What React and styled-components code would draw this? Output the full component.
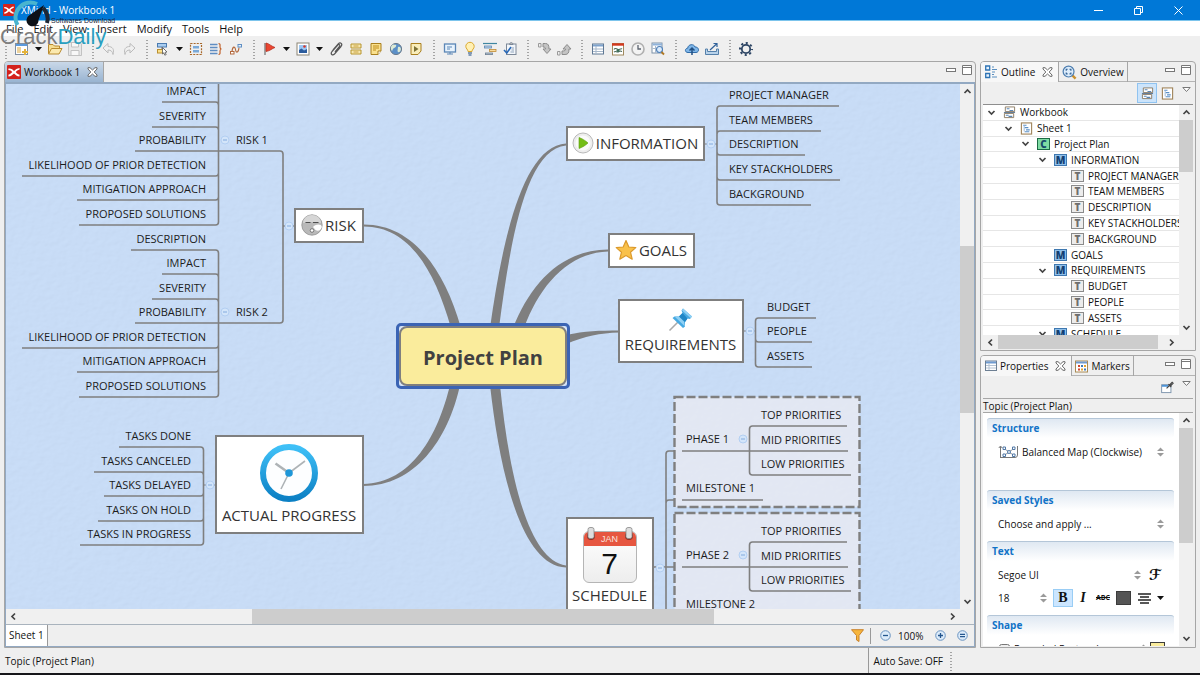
import React from "react";
import styled, { createGlobalStyle, css } from "styled-components";

const GlobalStyle = createGlobalStyle`
  *, *::before, *::after { box-sizing: border-box; }
  body { margin: 0; background: #efefef; }
  button, select { font: inherit; color: inherit; background: none; border: 0; margin: 0; padding: 0; }
  ul { list-style: none; margin: 0; padding: 0; }
  svg { display: block; flex: none; }
`;

const LINE = "#7f7f7f";

const Shell = styled.div`
  position: relative;
  display: flex;
  flex-direction: column;
  height: 100vh;
  min-height: 480px;
  overflow: hidden;
  font-family: "Open Sans", "Noto Sans", sans-serif;
  font-size: 10px;
  line-height: 14px;
  color: #111;
  background: #efefef;
`;

/* ---------- title bar, menu, watermark ---------- */
const TitleBar = styled.header`
  display: flex;
  align-items: center;
  height: 21px;
  flex: none;
  padding: 0 2px 0 3px;
  background: #0078d7;
  border-bottom: 1px solid #7cc4ec;
  color: #fff;
`;
const Title = styled.h1`
  flex: 1;
  margin: 0 0 0 6px;
  font-size: 10px;
  font-weight: 400;
`;
const WindowButton = styled.button`
  width: 40px;
  height: 20px;
  display: grid;
  place-items: center;
`;
const MenuBar = styled.nav`
  display: flex;
  align-items: center;
  height: 15px;
  flex: none;
  padding-left: 6px;
  gap: 10px;
  background: #fff;
  font-size: 11px;
`;
const Watermark = styled.div`
  position: absolute;
  left: 0;
  top: 0;
  z-index: 5;
  pointer-events: none;
  font-family: "Liberation Sans", sans-serif;
`;
const WatermarkTag = styled.div`
  position: absolute;
  left: 51px;
  top: 16px;
  font-size: 7px;
  line-height: 10px;
  white-space: nowrap;
  color: #223;
`;
const WatermarkName = styled.div`
  position: absolute;
  left: 0;
  top: 22px;
  font-size: 22px;
  line-height: 30px;
  white-space: nowrap;
  color: #7d7d7d;
  b { color: #2a9fc0; font-weight: 400; }
`;

/* ---------- toolbar ---------- */
const ToolBar = styled.div`
  display: flex;
  align-items: center;
  height: 25px;
  flex: none;
  margin-left: -2px;
`;
const ToolButton = styled.button`
  width: ${(p) => (p.$menu ? 13 : 20)}px;
  height: 20px;
  display: grid;
  place-items: center;
  opacity: ${(p) => (p.$off ? 0.6 : 1)};
`;
const ToolSep = styled.span`
  width: 14px;
  height: 20px;
  background: radial-gradient(circle, #a4a4a4 1px, transparent 1px) 7px 0 / 2px 3px repeat-y;
`;

/* ---------- frames ---------- */
const Main = styled.main`
  flex: 1;
  min-height: 0;
  display: flex;
  gap: 4px;
  padding: 0 4px;
`;
const Panel = styled.section`
  display: flex;
  flex-direction: column;
  min-width: 0;
  min-height: 0;
  flex: ${(p) => p.$grow || 1};
  border: 1px solid #a6a6a6;
  border-radius: 4px 4px 0 0;
`;
const SideColumn = styled.aside`
  display: flex;
  flex-direction: column;
  gap: 4px;
  width: 216px;
  flex: none;
`;
const TabStrip = styled.div`
  display: flex;
  height: 20px;
  flex: none;
  position: relative;
  ${(p) => p.$ruled && css`box-shadow: inset 0 -1px 0 #b4b4b4;`}
`;
const Tab = styled.button`
  display: flex;
  align-items: center;
  height: 20px;
  gap: 3px;
  padding: 0 ${(p) => (p.$active ? 5 : 3)}px 0 ${(p) => (p.$active ? 4 : 3)}px;
  border-right: 1px solid #a6a6a6;
  white-space: nowrap;
  border-radius: 3px 0 0 0;
  ${(p) => p.$active && css`background: #f7f7f7;`}
  ${(p) => p.$editor && css`
    padding: 0 5px 0 2px;
    background: linear-gradient(#c9d8e8, #99b4d1);
  `}
  span + svg { margin-left: 4px; }
`;
const StripTools = styled.div`
  display: flex;
  gap: 4px;
  margin-left: auto;
  padding: 2px ${(p) => p.$end || 1}px 0 0;
`;
const MiniButton = styled.button`
  width: 12px;
  height: 12px;
  display: grid;
  place-items: center;
`;
const ViewMenuButton = styled(MiniButton)`
  align-self: flex-start;
  margin: 2px 0 0 3px;
`;

/* ---------- scroll bars ---------- */
const ScrollBar = styled.div`
  display: flex;
  flex: none;
  flex-direction: ${(p) => (p.$row ? "row" : "column")};
  ${(p) => (p.$row ? "height" : "width")}: ${(p) => p.$size || 14}px;
  ${(p) => p.$row && css`margin-right: 14px;`}
  background: #f0f0f0;
`;
const ScrollEnd = styled.button`
  display: grid;
  place-items: center;
  flex: 0 0 15px;
`;
const Track = styled.div`
  flex: 1;
  display: flex;
  flex-direction: inherit;
  &::before { content: ""; flex: ${(p) => p.$before}; }
  &::after { content: ""; flex: ${(p) => p.$after}; }
`;
const Thumb = styled.div`
  flex: ${(p) => p.$size};
  background: #cdcdcd;
`;
const Chevron = ({ dir }) => (
  <svg width="9" height="9" viewBox="0 0 9 9" fill="none" stroke="#444" strokeWidth="1.7">
    <path d={{ up: "M1.5 6L4.5 3L7.5 6", down: "M1.5 3L4.5 6L7.5 3", left: "M6 1.5L3 4.5L6 7.5", right: "M3 1.5L6 4.5L3 7.5" }[dir]} />
  </svg>
);
const Scroller = ({ row, size, before, thumb, after }) => (
  <ScrollBar $row={row} $size={size}>
    <ScrollEnd aria-label={row ? "Scroll left" : "Scroll up"}><Chevron dir={row ? "left" : "up"} /></ScrollEnd>
    <Track $before={before} $after={after}><Thumb $size={thumb} /></Track>
    <ScrollEnd aria-label={row ? "Scroll right" : "Scroll down"}><Chevron dir={row ? "right" : "down"} /></ScrollEnd>
  </ScrollBar>
);

/* ---------- editor ---------- */
const EditorBody = styled.div`
  flex: 1;
  min-height: 0;
  display: flex;
  flex-direction: column;
  border: 1px solid #93a9c2;
  border-top-width: 2px;
`;
const EditorView = styled.div`
  flex: 1;
  min-height: 0;
  display: flex;
`;
const Canvas = styled.div`
  position: relative;
  flex: 1;
  min-width: 0;
  overflow: hidden;
  background: #c8dcf6;
`;
const Paper = styled.svg`
  position: absolute;
  inset: 0;
  width: 100%;
  height: 100%;
`;
/* the map is scrolled by this offset inside its view port */
const MapLayer = styled.div`
  position: absolute;
  left: -6px;
  top: -84px;
  width: 1200px;
  height: 900px;
`;
const Lines = styled.svg`
  position: absolute;
  inset: 0;
`;
const SubTopic = styled.div`
  position: absolute;
  ${(p) => (p.$right ? `right: ${1200 - p.$x}px` : `left: ${p.$x}px`)};
  top: ${(p) => p.$y - 8}px;
  font-size: 11px;
  line-height: 16px;
  white-space: nowrap;
  color: #1c1c1c;
`;
const MainTopic = styled.div`
  position: absolute;
  left: ${(p) => p.$x}px;
  top: ${(p) => p.$y}px;
  width: ${(p) => p.$w}px;
  height: ${(p) => p.$h}px;
  display: flex;
  flex-direction: ${(p) => (p.$stack ? "column" : "row")};
  align-items: center;
  justify-content: center;
  gap: 2px;
  padding: 0 1px 2px 0;
  border: 2px solid ${LINE};
  background: #fff;
  font-size: 15px;
  line-height: 20px;
  white-space: nowrap;
  color: #333;
`;
const CentralTopic = styled.div`
  position: absolute;
  left: 399px;
  top: 326px;
  width: 168px;
  height: 60px;
  padding-top: 3px;
  display: grid;
  place-items: center;
  border: 2px solid ${LINE};
  border-radius: 8px;
  background: #faec9c;
  box-shadow: 0 0 0 2px #d5e3f6;
  font-size: 20px;
  font-weight: 700;
  color: #414141;
  &::before {
    content: "";
    position: absolute;
    inset: -5px;
    border: 3px solid #3b64b4;
    border-radius: 5px;
  }
`;
const SheetBar = styled.div`
  display: flex;
  align-items: center;
  height: 22px;
  flex: none;
  border-top: 1px solid #a9b3bd;
`;
const SheetTab = styled.button`
  align-self: stretch;
  padding: 0 3px 2px;
  background: #fff;
  border-right: 1px solid #999;
  margin-right: auto;
`;
const ZoomTools = styled.div`
  display: flex;
  align-items: center;
  padding-right: 4px;
`;
const ZoomButton = styled.button`
  display: grid;
  place-items: center;
  width: 16px;
  height: 18px;
  margin-left: ${(p) => (p.$apart ? 6 : 0)}px;
`;
const ZoomSep = styled.span`
  width: 1px;
  height: 16px;
  margin: 0 6px 0 5px;
  background: #999;
`;
const ZoomValue = styled.span`
  width: 39px;
  padding-left: 5px;
`;

/* ---------- outline ---------- */
const PanelTools = styled.div`
  display: flex;
  justify-content: flex-end;
  align-items: center;
  height: 22px;
  flex: none;
  padding-right: 3px;
`;
const PanelTool = styled.button`
  width: 20px;
  height: 20px;
  display: grid;
  place-items: center;
  ${(p) => p.$on && css`background: #cce4fb; border: 1px solid #90c3f0;`}
`;
const TreeFrame = styled.div`
  flex: 1;
  min-height: 0;
  display: flex;
  flex-direction: column;
  margin: 0 2px 1px;
  border-top: 1px solid #8e8e8e;
  background: #f0f0f0;
`;
const TreeArea = styled.div`
  flex: 1;
  min-height: 0;
  display: flex;
`;
const TreeView = styled.div`
  flex: 1;
  min-width: 0;
  overflow: hidden;
  background: #fff;
`;
const Tree = styled.ul`
  display: grid;
  grid-auto-rows: 1fr;
  height: 237px;
`;
const TreeRow = styled.li`
  display: flex;
  align-items: center;
  gap: 4px;
  min-height: 0;
  padding-left: ${(p) => 4 + p.$depth * 17}px;
  border-bottom: 1px solid #e6e6e6;
  white-space: nowrap;
  > svg:first-child, > i:first-child { width: 9px; margin-right: 3px; flex: none; }
`;
const badge = { C: ["#7fdca4", "#1c6b45", "#174a6a"], M: ["#8fc0ea", "#3f78b0", "#123f73"], T: ["#ececec", "#8b8b8b", "#6e6e6e"] };
const Badge = styled.span`
  width: 13px;
  height: 12px;
  flex: none;
  display: grid;
  place-items: center;
  border: 1px solid ${(p) => badge[p.$kind][1]};
  background: ${(p) => badge[p.$kind][0]};
  color: ${(p) => badge[p.$kind][2]};
  font-weight: 800;
  line-height: 10px;
`;

/* ---------- properties ---------- */
const PropertyTitle = styled.h2`
  margin: 0 2px;
  flex: none;
  height: 15px;
  border: solid #a6a6a6;
  border-width: 1px 0;
  font-size: 10px;
  font-weight: 400;
  line-height: 14px;
`;
const PropertyFrame = styled.div`
  flex: 1;
  min-height: 0;
  display: flex;
  margin: 0 2px 1px;
`;
const PropertyView = styled.div`
  flex: 1;
  min-width: 0;
  overflow: hidden;
  padding: 5px 5px 0 4px;
  background: #fff;
`;
const Group = styled.section`
  padding-bottom: ${(p) => (p.$roomy ? 28 : 7)}px;
`;
const GroupTitle = styled.h3`
  margin: 0 0 4px;
  height: 20px;
  padding-left: 5px;
  border-top: 1px solid #b4c6d8;
  border-radius: 3px;
  background: linear-gradient(#dfe8f2, #fff);
  font-size: 10px;
  line-height: 19px;
  font-weight: 700;
  color: #1173c7;
`;
const Field = styled.div`
  display: flex;
  align-items: center;
  height: 20px;
  padding-left: 11px;
  margin-bottom: ${(p) => (p.$tight ? 3 : 0)}px;
`;
const Picker = styled.label`
  position: relative;
  display: flex;
  align-items: center;
  gap: 3px;
  flex: ${(p) => (p.$w ? `0 0 ${p.$w}px` : 1)};
  padding-right: ${(p) => p.$end || 0}px;
  select { flex: 1; min-width: 0; appearance: none; outline: 0; }
`;
const TextButton = styled.button`
  width: 20px;
  height: 18px;
  display: grid;
  place-items: center;
  font-family: "Liberation Serif", serif;
  font-size: 14px;
  font-weight: 700;
  font-style: ${(p) => (p.$italic ? "italic" : "normal")};
  ${(p) => p.$on && css`background: #cce6ff; border: 1px solid #99cdf5;`}
`;
const StrikeButton = styled(TextButton)`
  font-family: "Open Sans", sans-serif;
  font-size: 7px;
  text-decoration: line-through;
`;
const ScriptButton = styled(TextButton)`
  width: 28px;
  margin-right: 5px;
  font-family: "DejaVu Sans", "DejaVu Serif", serif;
  font-size: 15px;
`;
const Swatch = styled.button`
  width: 15px;
  height: 14px;
  margin: 0 3px 0 3px;
  border: 1px solid #3c3c3c;
  background: #555;
`;
const FillSwatch = styled(Swatch)`
  background: #faec9c;
`;

/* ---------- status ---------- */
const StatusBar = styled.footer`
  display: flex;
  align-items: center;
  height: 27px;
  flex: none;
  padding: 0 243px 0 5px;
  border-bottom: 2px solid #16161a;
`;
const StatusCell = styled.span`
  margin-left: auto;
  align-self: stretch;
  display: flex;
  align-items: center;
  border-left: 1px solid #999;
  padding-left: 4px;
`;

/* ---------- icons ---------- */
const Ic = ({ w = 16, children, s = 16 }) => (
  <svg width={w} height={w} viewBox={`0 0 ${s} ${s}`} fill="none">{children}</svg>
);
const XLogo = ({ w = 12 }) => (
  <svg width={w} height={w} viewBox="0 0 14 14">
    <rect width="14" height="14" rx="1" fill="#d3221d" />
    <path d="M1.5 3.6C4.5 3.4 5.6 4.6 7 6.1C8.6 4.4 10 3.2 12.5 2.9L12.6 4.4C10.8 5 9.6 5.8 8.7 7C9.8 8.4 10.8 9.3 12.6 9.8L12.4 11.4C9.9 11.2 8.5 10 7 8.4C5.4 10 4 11.2 1.5 11.4L1.4 9.8C3.2 9.3 4.3 8.3 5.3 7.1C4.2 5.8 3.2 5.2 1.4 5.1Z" fill="#fff" />
  </svg>
);
const CloseMark = () => (
  <svg width="11" height="10" viewBox="0 0 11 10" fill="#fff" stroke="#6b6b6b" strokeWidth="1">
    <path d="M1 .7H3L5.5 3L8 .7H10V2L7.2 5L10 8V9.3H8L5.5 7L3 9.3H1V8L3.8 5L1 2Z" />
  </svg>
);
const Caret = () => <svg width="7" height="4"><path d="M0 0H7L3.5 4Z" fill="#111" /></svg>;
const Spin = () => (
  <svg width="7" height="10"><path d="M0 4H7L3.5 .5ZM0 6H7L3.5 9.500Z" fill="#9a9a9a" /></svg>
);
const MinimizeMark = () => <svg width="10" height="5"><rect x=".5" y=".5" width="9" height="3" fill="#fff" stroke="#777" /></svg>;
const MaximizeMark = () => <svg width="10" height="10"><path d="M.5 .5H9.500V9.500H.5ZM.5 2.500H9.500" fill="#fff" stroke="#777" /></svg>;
const ViewMenuMark = () => <svg width="9" height="6"><path d="M.8 .5H8.200L4.500 4.500Z" fill="#fff" stroke="#777" /></svg>;
const BookIcon = ({ w = 13 }) => (
  <Ic w={w} s={14}>
    <path d="M2.500 1H12.500V6H2.500ZM1.500 8H11.500V12.500H1.500Z" fill="#fff" stroke="#8a7a62" />
    <path d="M4 3H7M7 4.800H11M3 10H6M6 11.200H10" stroke="#5a86b5" strokeWidth="1.200" />
    <path d="M1 7H13" stroke="#5c7691" />
  </Ic>
);
const SheetIcon = ({ w = 12 }) => (
  <Ic w={w} s={14}>
    <rect x="1.500" y="1" width="11" height="12" fill="#fff" stroke="#a0855c" strokeWidth="1.200" />
    <path d="M3.500 3.500H7M5 6H9M6.500 8.500H10.500M5 10.500H10" stroke="#5a8fc6" strokeWidth="1.300" />
    <path d="M4.500 4V10" stroke="#9ab8d6" />
  </Ic>
);
const OutlineIcon = () => (
  <svg width="13" height="14" viewBox="0 0 13 14" fill="#e6f2fd" stroke="#2f74b5">
    <path d="M.7 1H4.700V5H.7ZM.7 8.500H4.700V12.500H.7Z" strokeWidth="1.300" />
    <path d="M7 2H9M7 4.500H12M7 7H10M7 9.500H9M7 12H12" stroke="#5b8fc0" strokeWidth="1.200" />
  </svg>
);
const OverviewIcon = () => (
  <Ic w={15}>
    <path d="M10.500 10.500L14.500 14.500" stroke="#c9902f" strokeWidth="2.600" />
    <circle cx="7" cy="7" r="5.800" fill="#dcecfb" stroke="#4d7daf" strokeWidth="1.300" />
    <path d="M4.500 6V4.500H6M8 4.500H9.500V6M9.500 8V9.500H8M6 9.500H4.500V8" stroke="#2f5f93" strokeWidth="1.200" />
  </Ic>
);
const PropertiesIcon = () => (
  <Ic w={12} s={12}>
    <rect x=".5" y="1" width="11" height="9.500" fill="#fff" stroke="#6d7f93" />
    <path d="M1 2.500H11" stroke="#6f9bd0" strokeWidth="2" />
    <path d="M4 3V10M1 5.500H11M1 8H11" stroke="#b5c3d3" />
  </Ic>
);
const MarkersIcon = () => (
  <Ic w={13} s={13}>
    <rect x=".5" y="1" width="12" height="11" fill="#fff" stroke="#a88a52" />
    <path d="M1 2.500H12" stroke="#6f9bd0" strokeWidth="2" />
    <path d="M3 6H5M3 9.500H5" stroke="#d2452c" strokeWidth="2" />
    <path d="M6 6H8M9 9.500H11" stroke="#3c79b8" strokeWidth="2" />
    <path d="M9 6H11M6 9.500H8" stroke="#e5a22c" strokeWidth="2" />
  </Ic>
);
const PinViewIcon = () => (
  <Ic w={13} s={14}>
    <rect x=".7" y="4" width="10" height="8.500" fill="#fff" stroke="#7c93ac" />
    <path d="M1 5.200H8" stroke="#4e94d8" strokeWidth="2" />
    <path d="M6 8L9 5M8 3.500L11 6.500M9.500 4L12 1.500L13 2.500L10.500 5" stroke="#444" strokeWidth="1.300" />
  </Ic>
);

const icons = {
  new: <Ic><rect x="1.500" y="2.500" width="12" height="11" fill="#fff" stroke="#7f8fa3" /><path d="M2 4H13" stroke="#5b9add" strokeWidth="2" /><path d="M3 7H7M3 9H7M3 11H7" stroke="#d9a63c" /><path d="M11 8V14M8 11H14" stroke="#e3b23b" strokeWidth="2" /></Ic>,
  open: <Ic><path d="M1.500 12.500V3.500H6L7.500 5H12.500V7" fill="#f6dd91" stroke="#b98a2d" /><path d="M1.500 13L4.500 7.500H15L12 13Z" fill="#fbe9ae" stroke="#b98a2d" /></Ic>,
  save: <Ic><path d="M1.500 1.500H13L14.500 3V14.500H1.500Z" fill="#e4e4e4" stroke="#a5a5a5" /><path d="M4.500 2V6H11.500V2M4 14V9.500H12V14" fill="#fff" stroke="#a5a5a5" /></Ic>,
  undo: <Ic><path d="M2 7L7 2.500V5.500C11.500 5.500 13.500 8 12 13.500C11.500 10.500 10 9 7 9V12Z" fill="#f2f2f2" stroke="#999" /></Ic>,
  redo: <Ic><path d="M14 7L9 2.500V5.500C4.500 5.500 2.500 8 4 13.500C4.500 10.500 6 9 9 9V12Z" fill="#f2f2f2" stroke="#999" /></Ic>,
  topic: <Ic><rect x="2.500" y="2.500" width="9" height="3.500" fill="#a9cdf0" stroke="#4b7bb0" /><rect x="2.500" y="8.500" width="7" height="3.500" fill="#fbe08a" stroke="#b98f30" /><path d="M7 6V8" stroke="#666" /><path d="M7.500 6.500L12 11L10 11.300L11.200 13.600L9.800 14.200L8.800 11.800L7.500 13Z" fill="#fff" stroke="#555" strokeWidth=".8" /></Ic>,
  boundary: <Ic><rect x="2.500" y="2.500" width="11" height="11" stroke="#a8692c" strokeWidth="1.200" strokeDasharray="2 1.140" /><rect x="5" y="5" width="6" height="2.500" fill="#7aa9d8" /><rect x="5" y="9" width="6" height="2.500" fill="#7aa9d8" /></Ic>,
  summary: <Ic><path d="M2 3.500H9.500M2 6.500H9.500M2 9.500H9.500M2 12.500H9.500" stroke="#5f8dc2" strokeWidth="1.300" /><path d="M10.500 2.500C12.500 2.500 12 4 12 6C12 7.500 12.500 8 13.500 8C12.500 8 12 8.500 12 10C12 12 12.500 13.500 10.500 13.500" stroke="#c0622d" strokeWidth="1.200" /></Ic>,
  relation: <Ic><path d="M4 10.500C4.500 5 7 5 7.500 8.500C8 12.500 10.500 12 11 6.500" stroke="#b3683c" strokeWidth="1.100" /><rect x="10" y="3.500" width="3.500" height="2.500" fill="#e8f1fb" stroke="#5f8fc4" /><rect x="2.500" y="10.500" width="3.500" height="2.500" fill="#fff" stroke="#b3683c" /></Ic>,
  flag: <Ic><path d="M3 2V14" stroke="#8f8f8f" strokeWidth="1.600" /><path d="M4 2C7 2.500 9 5 13 6.500C10 7.500 8 10 4 10.500Z" fill="#ea4631" stroke="#b22a1b" strokeWidth=".7" /></Ic>,
  image: <Ic><rect x="2" y="2" width="12" height="12" fill="#fff" stroke="#8b8577" /><rect x="4" y="4" width="8" height="8" fill="#9cc6f2" /><path d="M4 12V9L6.500 7.500L9 9.500L12 8V12Z" fill="#2c5c9d" /><circle cx="9.500" cy="5.500" r="1.300" fill="#d5392b" /></Ic>,
  clip: <Ic><path d="M7 11L11.500 5.500C12.500 4 11 2.800 9.800 4L4 10.500C2 13 4.500 15 6.500 13L13 5.500C15 3 12.500 .5 10.200 2.800L5 8.800" stroke="#555" strokeWidth="1.200" /></Ic>,
  label: <Ic><path d="M3 3H13V7H3ZM3 9H13V13H3Z" fill="#f7e8b0" stroke="#b8952f" /><path d="M5.500 5H10.500M5.500 11H10.500" stroke="#c8a040" /></Ic>,
  note: <Ic><path d="M3 2.500H13V10L10 13.500H3Z" fill="#f9e08e" stroke="#a97f1d" /><path d="M5 5H11M5 7H11M5 9H8" stroke="#c08c18" strokeWidth="1.100" /><path d="M13 10H10V13.500" fill="#fff" stroke="#a97f1d" /></Ic>,
  web: <Ic><circle cx="8" cy="8" r="5.600" fill="#5b8fc7" stroke="#6a7b8c" /><path d="M5 3.500C7 4 9 3 8 5.500C7 7 5 7 4.500 9C4 11 3 9 2.800 7C3 5.200 4 4 5 3.500ZM10 6C12 5 13.300 7 12.800 9C11.800 11.600 10 12 9.500 10Z" fill="#dcead6" /></Ic>,
  audio: <Ic><path d="M3 2.500H13V10L10 13.500H3Z" fill="#f9edba" stroke="#a97f1d" /><path d="M6 5L10.500 8L6 11Z" fill="#7d7236" /></Ic>,
  present: <Ic><rect x="2.500" y="3" width="11" height="8" fill="#e8f3fd" stroke="#5b86b6" strokeWidth="1.300" /><path d="M5 6H10M5 8H8M5 13H11M8 11V13" stroke="#5b86b6" /></Ic>,
  idea: <Ic><path d="M6 10.500C6 8.500 3.800 7.500 3.800 5.500A4.200 4.200 0 0 1 12.200 5.500C12.200 7.500 10 8.500 10 10.500Z" fill="#fff0b4" stroke="#dba92f" /><path d="M6 12H10M6.500 14H9.500" stroke="#5f7da3" strokeWidth="1.300" /></Ic>,
  gantt: <Ic><path d="M1 2.500H15" stroke="#3f86a0" strokeWidth="1.200" /><rect x="2.500" y="5" width="7" height="2" fill="#b9d3ec" stroke="#5f87b0" strokeWidth=".8" /><rect x="7.500" y="8.500" width="6.500" height="2" fill="#f8dca0" stroke="#c08a34" strokeWidth=".8" /><rect x="3.500" y="12" width="7" height="1.600" fill="#b9c6d4" stroke="#6d7f92" strokeWidth=".8" /></Ic>,
  task: <Ic><rect x="4.500" y="3" width="9.500" height="10.500" fill="#f2f6fb" stroke="#7c8898" /><path d="M7.500 3.500C7.500 1 11 1 11 3.500Z" fill="#bbb" stroke="#7c8898" /><path d="M9.500 7H12M9.500 9H12M8.500 11H12" stroke="#8fa3ba" /><path d="M2 9L4.800 12L9 6" stroke="#2768b8" strokeWidth="1.600" /></Ic>,
  drillDown: <Ic><path d="M2.500 2.500H5V6H2.500Z" fill="#eee" stroke="#9a9a9a" /><path d="M7 2.500H9.500C12.300 2.500 13 4.500 13 8H15L11 12.500L7 8H9.500C9.500 6.500 9 6 7 6Z" fill="#c4c4c4" stroke="#8d8d8d" /></Ic>,
  drillUp: <Ic><path d="M1.500 10.500H4V14H1.500Z" fill="#eee" stroke="#9a9a9a" /><path d="M6 13.500H9C12.300 13.500 13 11.500 13 8H15L11 3.500L7 8H9.500C9.500 9.500 9 10 6 10Z" fill="#c4c4c4" stroke="#8d8d8d" /></Ic>,
  table: <Ic><rect x="2.500" y="3" width="11" height="10" fill="#fff" stroke="#5f7894" /><path d="M3 4.500H13" stroke="#7ea3cd" strokeWidth="2" /><path d="M6 5V13M3 8H13M3 10.500H13" stroke="#a6b7ca" /></Ic>,
  theme: <Ic><rect x="2.500" y="2.500" width="11" height="11.500" fill="#fff" stroke="#a08a5e" /><path d="M2 3.500H14" stroke="#d3381f" strokeWidth="2.400" /><path d="M4 8.500C5 6.500 7 8 8 8.500S11 7 12 8M4 11C6 9.500 7 12 9 10.500S11 11 12 10.500" stroke="#4a6b5a" strokeWidth="1.100" /><circle cx="8" cy="9.500" r="1.500" fill="#3c6f58" /></Ic>,
  history: <Ic><circle cx="8" cy="8" r="6" fill="#f3f3f3" stroke="#b0b0b0" strokeWidth="1.600" /><path d="M8 4V8H11" stroke="#5c6470" strokeWidth="1.300" /></Ic>,
  find: <Ic><rect x="2" y="2" width="10" height="10" fill="#fff" stroke="#7f93aa" /><path d="M2.500 3.500H12" stroke="#8fb2da" strokeWidth="2" /><path d="M5.500 5V12M2.500 7.500H6" stroke="#a9b9cb" /><circle cx="9.500" cy="8.500" r="3" fill="#dcecfc" stroke="#4d7fb8" strokeWidth="1.100" /><path d="M11.500 11L14 13.500" stroke="#b07823" strokeWidth="1.800" /></Ic>,
  cloud: <Ic><path d="M4 11.500C.5 11.500 .7 7.300 3.700 7.200C4 3 10 2.500 11 6C15.500 5.800 15.500 11.500 12 11.500Z" fill="#7fb6e8" stroke="#2f6ba8" /><path d="M8 14V7M5.500 9.500L8 7L10.500 9.500" stroke="#204f82" strokeWidth="1.500" /></Ic>,
  share: <Ic><path d="M1.500 8H3.500V10.500H12.500V8H14.500V13.500H1.500Z" fill="#b8d2ea" stroke="#5580aa" /><path d="M6 9L12.500 3M9.500 2.500H13V6" stroke="#31629a" strokeWidth="1.200" /></Ic>,
  gear: <Ic><circle cx="8" cy="8" r="4.200" stroke="#2d4564" strokeWidth="1.800" /><circle cx="8" cy="8" r="6" stroke="#2d4564" strokeWidth="2" strokeDasharray="2.100 2.612" strokeDashoffset="1" /></Ic>,
};

const tools = [
  "|", "new:New", ">", "open:Open", "save:Save:off", "|", "undo:Undo:off", "redo:Redo:off", "|",
  "topic:Topic", ">", "boundary:Boundary", "summary:Summary", "relation:Relationship", "|",
  "flag:Marker", ">", "image:Image", ">", "clip:Attachment", "label:Label", "note:Notes", "web:Hyperlink", "audio:Audio notes", "|",
  "present:Presentation", "idea:Brainstorming", "gantt:Gantt chart", "task:Task info", "|", "drillDown:Drill down", "drillUp:Drill up", "|",
  "table:Table", "theme:Theme", "history:History", "find:Find", "|", "cloud:Upload", "share:Share", "|", "gear:Preferences",
];

/* ---------- map data ---------- */
const riskItems = [["IMPACT", 162], ["SEVERITY", 152], ["PROBABILITY", 135], ["LIKELIHOOD OF PRIOR DETECTION", 22], ["MITIGATION APPROACH", 77], ["PROPOSED SOLUTIONS", 79]];
const rows = (items, ys) => items.map(([text, end], i) => ({ text, end, y: ys[i] }));
const phaseItems = [["TOP PRIORITIES", 847], ["MID PRIORITIES", 848], ["LOW PRIORITIES", 851]];
const branches = [
  { trunk: 218.5, text: 206, right: true, mid: 151, top: 80, rows: rows(riskItems, [102, 127, 151, 176, 200, 225]) },
  { trunk: 218.5, text: 206, right: true, mid: 323, rows: rows([["DESCRIPTION", 131], ...riskItems], [250, 274, 299, 323, 348, 372, 397]) },
  { trunk: 203.5, text: 191, right: true, mid: 485, rows: rows([["TASKS DONE", 119], ["TASKS CANCELED", 94], ["TASKS DELAYED", 104], ["TASKS ON HOLD", 98], ["TASKS IN PROGRESS", 80]], [447, 472, 496, 521, 545]) },
  { trunk: 717, text: 729, mid: 144, rows: rows([["PROJECT MANAGER", 839], ["TEAM MEMBERS", 821], ["DESCRIPTION", 805], ["KEY STACKHOLDERS", 840], ["BACKGROUND", 811]], [106, 131, 155, 180, 205]) },
  { trunk: 755.5, text: 767, mid: 331, rows: rows([["BUDGET", 816], ["PEOPLE", 812], ["ASSETS", 812]], [318, 342, 367]) },
  { trunk: 749.5, text: 761, mid: 451, rows: rows(phaseItems, [426, 451, 475]) },
  { trunk: 749.5, text: 761, mid: 567, rows: rows(phaseItems, [542, 567, 591]) },
];
const singles = [["RISK 1", 236, 140], ["RISK 2", 236, 312], ["PHASE 1", 686, 439], ["MILESTONE 1", 686, 488], ["PHASE 2", 686, 555], ["MILESTONE 2", 686, 604]];
const folds = [[225, 140], [225, 312], [289, 226], [210, 485], [711, 144], [750, 331], [743, 439], [743, 555], [660, 568]];

const branchPath = ({ trunk, right, mid, top, rows: list }) => {
  const s = right ? -1 : 1;
  const first = top ?? list[0].y + 3;
  const last = list[list.length - 1].y - 3;
  return `M${trunk} ${first}V${last}` + list.map(({ y, end }) => {
    if (y === mid) return `M${trunk} ${y}H${end}`;
    const d = y < mid ? 3 : -3;
    return `M${trunk} ${y + d}Q${trunk} ${y} ${trunk + s * 3} ${y}H${end}`;
  }).join("");
};

const MapLines = () => (
  <Lines width="1200" height="900" fill="none" stroke={LINE} strokeWidth="1.6">
    <g fill={LINE} stroke="none">
      <path d="M490 328C503 235 524 146 566 143.500V145.500C527 149 511 235 499 328Z" />
      <path d="M513 328C530 285 560 250 608 249.500V251.500C568 253 540 285 524 328Z" />
      <path d="M566 335C585 331 600 330.500 619 330.500V332.500C600 333 585 336 566 344Z" />
      <path d="M363 226.500C408 226 434 268 451 328H461C444 268 412 224 363 224.500Z" />
      <path d="M363 484C412 483 438 435 450 385H460C448 440 415 486 363 486Z" />
      <path d="M490 385C500 475 522 566 566 567.500V565.500C528 560 509 475 500 385Z" />
    </g>
    <g fill="#ebebf1" fillOpacity=".75" strokeWidth="2.400" strokeDasharray="9 3">
      <rect x="674.500" y="397" width="185" height="110" />
      <rect x="674.500" y="513" width="185" height="114" />
    </g>
    {branches.map((b, i) => <path key={i} d={branchPath(b)} />)}
    <path d="M218 151H280Q283 151 283 154V320Q283 323 280 323H218M283 226H294" />
    <path d="M204 485H216M705 144H717M744 331H755" strokeWidth="1" />
    <path d="M674 451H669Q666 451 666 454V620M674 500H669Q666 500 666 503M654 567H674" />
    <path d="M682 451H749M682 500H763M682 567H749" />
    {folds.map(([x, y]) => (
      <g key={`${x}-${y}`} strokeWidth="1" stroke="#b3cff2">
        <circle cx={x} cy={y} r="4" fill="#d3e5fa" />
        <path d={`M${x - 2} ${y}H${x + 2}`} stroke="#82aadd" />
      </g>
    ))}
  </Lines>
);

const PlayMark = () => (
  <Ic w={22} s={22}>
    <circle cx="11" cy="11" r="10" fill="#ededed" stroke="#b9b9b9" /><circle cx="11" cy="11" r="7.500" fill="#fafafa" />
    <path d="M7 5.500C10 6.500 14 9 16 11C14 13 10 15.500 7 16.500Z" fill="#74bd16" stroke="#5c9e0c" strokeWidth=".6" />
  </Ic>
);
const StarMark = () => (
  <Ic w={22} s={22}><path d="M11 1.500L13.800 8L20.800 8.600L15.500 13.200L17.200 20.200L11 16.500L4.800 20.200L6.500 13.200L1.200 8.600L8.200 8Z" fill="#f9c14a" stroke="#dc9a2c" strokeWidth="1.200" strokeLinejoin="round" /></Ic>
);
const FaceMark = () => (
  <Ic w={22} s={22}>
    <circle cx="11" cy="11" r="10.200" fill="#b9b9b9" stroke="#8e8e8e" strokeWidth=".8" />
    <path d="M2 9A9 8 0 0 1 20 9Q11 7 2 9Z" fill="#d6d6d6" />
    <path d="M4.500 8.500H9.500M12 8.500H17.500" stroke="#4f4f4f" strokeWidth="1.200" />
    <path d="M12 13C14 10 20.500 9.500 20.800 13C20 16.500 17 17.500 14.500 16Z" fill="#fff" />
    <circle cx="11" cy="16.500" r="1.800" fill="#fff" stroke="#777" />
  </Ic>
);
const PushPin = () => (
  <svg width="26" height="26" viewBox="0 0 26 26">
    <path d="M10.500 15.500L1.500 24.500" stroke="#aaa" strokeWidth="1.600" />
    <path d="M15 2.500L24 10.500L22 13L19.500 12.500L17 16L17 20.500L15 22L4.500 12L6.500 10.500L11 10.500L14.500 7L13.500 4.500Z" fill="#45a9e2" />
    <path d="M15 2.500L24 10.500L22.500 12L14 4.500ZM6.500 10.500L11 10.500L16 15.500L17 20.500Z" fill="#8fd0f4" />
    <path d="M14.500 7L19.500 12.500L17 16L11 10.500Z" fill="#1f86c6" />
  </svg>
);
const ClockMark = () => (
  <svg width="60" height="60" viewBox="0 0 60 60">
    <defs><linearGradient id="ring" x2="0" y2="1"><stop stopColor="#3fc0f7" /><stop offset="1" stopColor="#0c80c4" /></linearGradient></defs>
    <circle cx="30" cy="30" r="26" fill="#fdfeff" stroke="url(#ring)" strokeWidth="6" />
    <path d="M30 30L16.500 20.500" stroke="#aeb3b6" strokeWidth="2.500" />
    <path d="M30 30L46 18M30 30L22 46" stroke="#aeb3b6" strokeWidth="1.600" />
    <circle cx="30" cy="30" r="3.800" fill="#1f97d8" />
  </svg>
);
const CalendarWrap = styled.div`
  position: relative;
  padding-top: 6px;
`;
const CalendarBox = styled.div`
  width: 54px;
  height: 52px;
  border: 1px solid #b5b5b5;
  border-radius: 6px;
  overflow: hidden;
  background: linear-gradient(#fff, #ededed);
  text-align: center;
  font-family: "Liberation Sans", sans-serif;
`;
const CalendarMonth = styled.div`
  height: 14px;
  background: #e65640;
  color: #fbe3df;
  font-size: 9px;
  line-height: 15px;
`;
const CalendarDay = styled.div`
  font-size: 30px;
  line-height: 36px;
  color: #111;
`;
const CalendarRings = styled.svg`
  position: absolute;
  left: 0;
  top: 2px;
`;
const Calendar = () => (
  <CalendarWrap>
    <CalendarBox><CalendarMonth>JAN</CalendarMonth><CalendarDay>7</CalendarDay></CalendarBox>
    <CalendarRings width="54" height="14">
      {[8, 46].map((x) => (
        <g key={x}>
          <circle cx={x} cy="9" r="4" fill="#8e2f22" />
          <rect x={x - 3} y=".5" width="6" height="11" rx="2" fill="#ddd" stroke="#888" strokeWidth=".8" />
        </g>
      ))}
    </CalendarRings>
  </CalendarWrap>
);

const tree = [
  [0, "book", "Workbook", 1], [1, "sheet", "Sheet 1", 1], [2, "C", "Project Plan", 1], [3, "M", "INFORMATION", 1],
  [4, "T", "PROJECT MANAGER"], [4, "T", "TEAM MEMBERS"], [4, "T", "DESCRIPTION"], [4, "T", "KEY STACKHOLDERS"], [4, "T", "BACKGROUND"],
  [3, "M", "GOALS"], [3, "M", "REQUIREMENTS", 1], [4, "T", "BUDGET"], [4, "T", "PEOPLE"], [4, "T", "ASSETS"], [3, "M", "SCHEDULE", 1],
];

const PanelButtons = ({ end }) => (
  <StripTools $end={end}>
    <MiniButton aria-label="Minimize panel"><MinimizeMark /></MiniButton>
    <MiniButton aria-label="Maximize panel"><MaximizeMark /></MiniButton>
  </StripTools>
);

const ZoomMark = ({ d }) => (
  <svg width="11" height="11" viewBox="0 0 11 11" fill="#dcebfa" stroke="#6a93c0">
    <circle cx="5.500" cy="5.500" r="4.800" /><path d={d} stroke="#24568e" strokeWidth="1.300" />
  </svg>
);

export default function App() {
  return (
    <Shell>
      <GlobalStyle />
      <TitleBar>
        <XLogo />
        <Title>XMind - Workbook 1</Title>
        <WindowButton aria-label="Minimize"><svg width="9" height="9"><path d="M0 4.500H9" stroke="#fff" /></svg></WindowButton>
        <WindowButton aria-label="Restore"><svg width="9" height="9" fill="none" stroke="#fff"><path d="M.5 2.500H6.500V8.500H.5ZM2.500 2.500V.5H8.500V6.500H6.500" /></svg></WindowButton>
        <WindowButton aria-label="Close"><svg width="9" height="9"><path d="M.5 .5L8.500 8.500M8.500 .5L.5 8.500" stroke="#fff" /></svg></WindowButton>
      </TitleBar>
      <MenuBar>
        {["File", "Edit", "View", "Insert", "Modify", "Tools", "Help"].map((m) => <button key={m}>{m}</button>)}
      </MenuBar>
      <Watermark>
        <svg width="56" height="28" viewBox="0 0 56 28" fill="none">
          <path d="M17.500 25A15 15 0 0 1 37 4" stroke="#49b4cf" strokeWidth="4" />
          <path d="M43 8A15 15 0 0 1 47 23" stroke="#1d2836" strokeWidth="4" />
          <path d="M44 5L38.500 20A6 6 0 1 1 29 15.500Z" fill="#0d1117" />
        </svg>
        <WatermarkTag>Softwares Download</WatermarkTag>
        <WatermarkName>Crack<b>Daily</b></WatermarkName>
      </Watermark>
      <ToolBar role="toolbar">
        {tools.map((t, i) => {
          if (t === "|") return <ToolSep key={i} />;
          if (t === ">") return <ToolButton key={i} $menu aria-label="More"><Caret /></ToolButton>;
          const [id, name, off] = t.split(":");
          return <ToolButton key={i} $off={off} title={name} aria-label={name}>{icons[id]}</ToolButton>;
        })}
      </ToolBar>

      <Main>
        <Panel>
          <TabStrip>
            <Tab $editor><XLogo w={14} /><span>Workbook 1</span><CloseMark /></Tab>
            <PanelButtons end={2} />
          </TabStrip>
          <EditorBody>
            <EditorView>
              <Canvas>
                <Paper>
                  <filter id="paper" x="0" y="0" width="100%" height="100%">
                    <feTurbulence type="fractalNoise" baseFrequency=".14 .2" numOctaves="2" seed="4" />
                    <feDiffuseLighting surfaceScale=".5" lightingColor="#cadef8" diffuseConstant="1.3"><feDistantLight azimuth="225" elevation="50" /></feDiffuseLighting>
                  </filter>
                  <rect width="100%" height="100%" filter="url(#paper)" opacity=".18" />
                </Paper>
                <MapLayer>
                  <MapLines />
                  {branches.map((b, i) => b.rows.map((r) => (
                    <SubTopic key={`${i}-${r.text}`} $right={b.right} $x={b.text} $y={r.y - 11}>{r.text}</SubTopic>
                  )))}
                  {singles.map(([text, x, y]) => <SubTopic key={text} $x={x} $y={y}>{text}</SubTopic>)}
                  <MainTopic $x={294} $y={208} $w={70} $h={35}><FaceMark />RISK</MainTopic>
                  <MainTopic $x={566} $y={126} $w={139} $h={35}><PlayMark />INFORMATION</MainTopic>
                  <MainTopic $x={608} $y={233} $w={87} $h={35}><StarMark />GOALS</MainTopic>
                  <MainTopic $x={618} $y={299} $w={126} $h={64} $stack><PushPin />REQUIREMENTS</MainTopic>
                  <MainTopic $x={215} $y={435} $w={149} $h={99} $stack><ClockMark />ACTUAL PROGRESS</MainTopic>
                  <MainTopic $x={566} $y={517} $w={88} $h={97} $stack><Calendar />SCHEDULE</MainTopic>
                  <CentralTopic>Project Plan</CentralTopic>
                </MapLayer>
              </Canvas>
              <Scroller before={147} thumb={167} after={181} />
            </EditorView>
            <Scroller row size={15} before={231} thumb={462} after={231} />
            <SheetBar>
              <SheetTab>Sheet 1</SheetTab>
              <ZoomTools>
                <ZoomButton aria-label="Filter">
                  <svg width="13" height="14" viewBox="0 0 13 14"><path d="M.5 .7H12.500L8 6.500V12.500L5.500 11V6.500Z" fill="#f7b63c" stroke="#c9822b" /></svg>
                </ZoomButton>
                <ZoomSep />
                <ZoomButton aria-label="Zoom out"><ZoomMark d="M3 5.500H8" /></ZoomButton>
                <ZoomValue>100%</ZoomValue>
                <ZoomButton aria-label="Zoom in"><ZoomMark d="M3 5.500H8M5.500 3V8" /></ZoomButton>
                <ZoomButton $apart aria-label="Actual size"><ZoomMark d="M3 4.300H8M3 6.700H8" /></ZoomButton>
              </ZoomTools>
            </SheetBar>
          </EditorBody>
        </Panel>

        <SideColumn>
          <Panel $grow={290}>
            <TabStrip $ruled>
              <Tab $active><OutlineIcon /><span>Outline</span><CloseMark /></Tab>
              <Tab><OverviewIcon /><span>Overview</span></Tab>
              <PanelButtons end={3} />
            </TabStrip>
            <PanelTools>
              <PanelTool $on aria-label="Workbook outline"><BookIcon /></PanelTool>
              <PanelTool aria-label="Sheet outline"><SheetIcon w={13} /></PanelTool>
              <ViewMenuButton aria-label="View menu"><ViewMenuMark /></ViewMenuButton>
            </PanelTools>
            <TreeFrame>
              <TreeArea>
                <TreeView>
                  <Tree role="tree">
                    {tree.map(([depth, kind, text, open], i) => (
                      <TreeRow key={i} role="treeitem" $depth={depth}>
                        {open ? <Chevron dir="down" /> : <i />}
                        {kind === "book" ? <BookIcon /> : kind === "sheet" ? <SheetIcon w={13} /> : <Badge $kind={kind}>{kind}</Badge>}
                        {text}
                      </TreeRow>
                    ))}
                  </Tree>
                </TreeView>
                <Scroller before={0} thumb={52} after={148} />
              </TreeArea>
              <Scroller row before={0} thumb={161} after={6} />
            </TreeFrame>
          </Panel>

          <Panel $grow={293}>
            <TabStrip $ruled>
              <Tab $active><PropertiesIcon /><span>Properties</span><CloseMark /></Tab>
              <Tab><MarkersIcon /><span>Markers</span></Tab>
              <PanelButtons end={3} />
            </TabStrip>
            <PanelTools>
              <PanelTool aria-label="Pin view"><PinViewIcon /></PanelTool>
              <ViewMenuButton aria-label="View menu"><ViewMenuMark /></ViewMenuButton>
            </PanelTools>
            <PropertyTitle>Topic (Project Plan)</PropertyTitle>
            <PropertyFrame>
              <PropertyView>
                <Group $roomy>
                  <GroupTitle>Structure</GroupTitle>
                  <Field>
                    <Picker $end={10}>
                      <svg width="21" height="14" viewBox="0 0 21 14" fill="none" stroke="#777">
                        <path d="M2.500 13V1.500M.8 3L2.500 1L4.200 3M2.500 12.500H17Q19.500 12.500 19.500 10V1" />
                        <path d="M6 3.500L16 10.500M16 3.500L6 10.500" stroke="#999" />
                        <path d="M5 2H7.500V4.500H5ZM14.500 2H17V4.500H14.500ZM5 9H7.500V11.500H5ZM14.500 9H17V11.500H14.500ZM9.700 5.700H12.300V8.300H9.700Z" fill="#fff" stroke="#4f77a5" />
                      </svg>
                      <select aria-label="Structure"><option>Balanced Map (Clockwise)</option></select>
                      <Spin />
                    </Picker>
                  </Field>
                </Group>
                <Group>
                  <GroupTitle>Saved Styles</GroupTitle>
                  <Field>
                    <Picker $end={10}>
                      <select aria-label="Saved styles"><option>Choose and apply ...</option></select><Spin />
                    </Picker>
                  </Field>
                </Group>
                <Group>
                  <GroupTitle>Text</GroupTitle>
                  <Field $tight>
                    <Picker><select aria-label="Font"><option>Segoe UI</option></select><Spin /></Picker>
                    <ScriptButton aria-label="Font dialog">ℱ</ScriptButton>
                  </Field>
                  <Field>
                    <Picker $w={49}><select aria-label="Font size"><option>18</option></select><Spin /></Picker>
                    <Picker as="span" $w={6} />
                    <TextButton $on aria-pressed="true">B</TextButton>
                    <TextButton $italic>I</TextButton>
                    <StrikeButton>ABC</StrikeButton>
                    <Swatch aria-label="Text colour" />
                    <TextButton aria-label="Align">
                      <svg width="13" height="11"><path d="M0 1H13M2 4H11M0 7H13M2 10H11" stroke="#222" strokeWidth="1.500" /></svg>
                    </TextButton>
                    <MiniButton aria-label="Align options"><Caret /></MiniButton>
                  </Field>
                </Group>
                <Group>
                  <GroupTitle>Shape</GroupTitle>
                  <Field>
                    <Picker>
                      <svg width="13" height="12"><rect x="1.500" y="1.500" width="10" height="9" rx="2" fill="#eee" stroke="#777" /></svg>
                      <select aria-label="Shape"><option>Rounded Rectangle</option></select><Spin />
                    </Picker>
                    <FillSwatch aria-label="Fill colour" />
                    <Picker as="span" $w={6} />
                  </Field>
                </Group>
              </PropertyView>
              <Scroller before={0} thumb={115} after={88} />
            </PropertyFrame>
          </Panel>
        </SideColumn>
      </Main>

      <StatusBar>
        <span>Topic (Project Plan)</span>
        <StatusCell>Auto Save: OFF</StatusCell>
        <ToolSep />
      </StatusBar>
    </Shell>
  );
}
